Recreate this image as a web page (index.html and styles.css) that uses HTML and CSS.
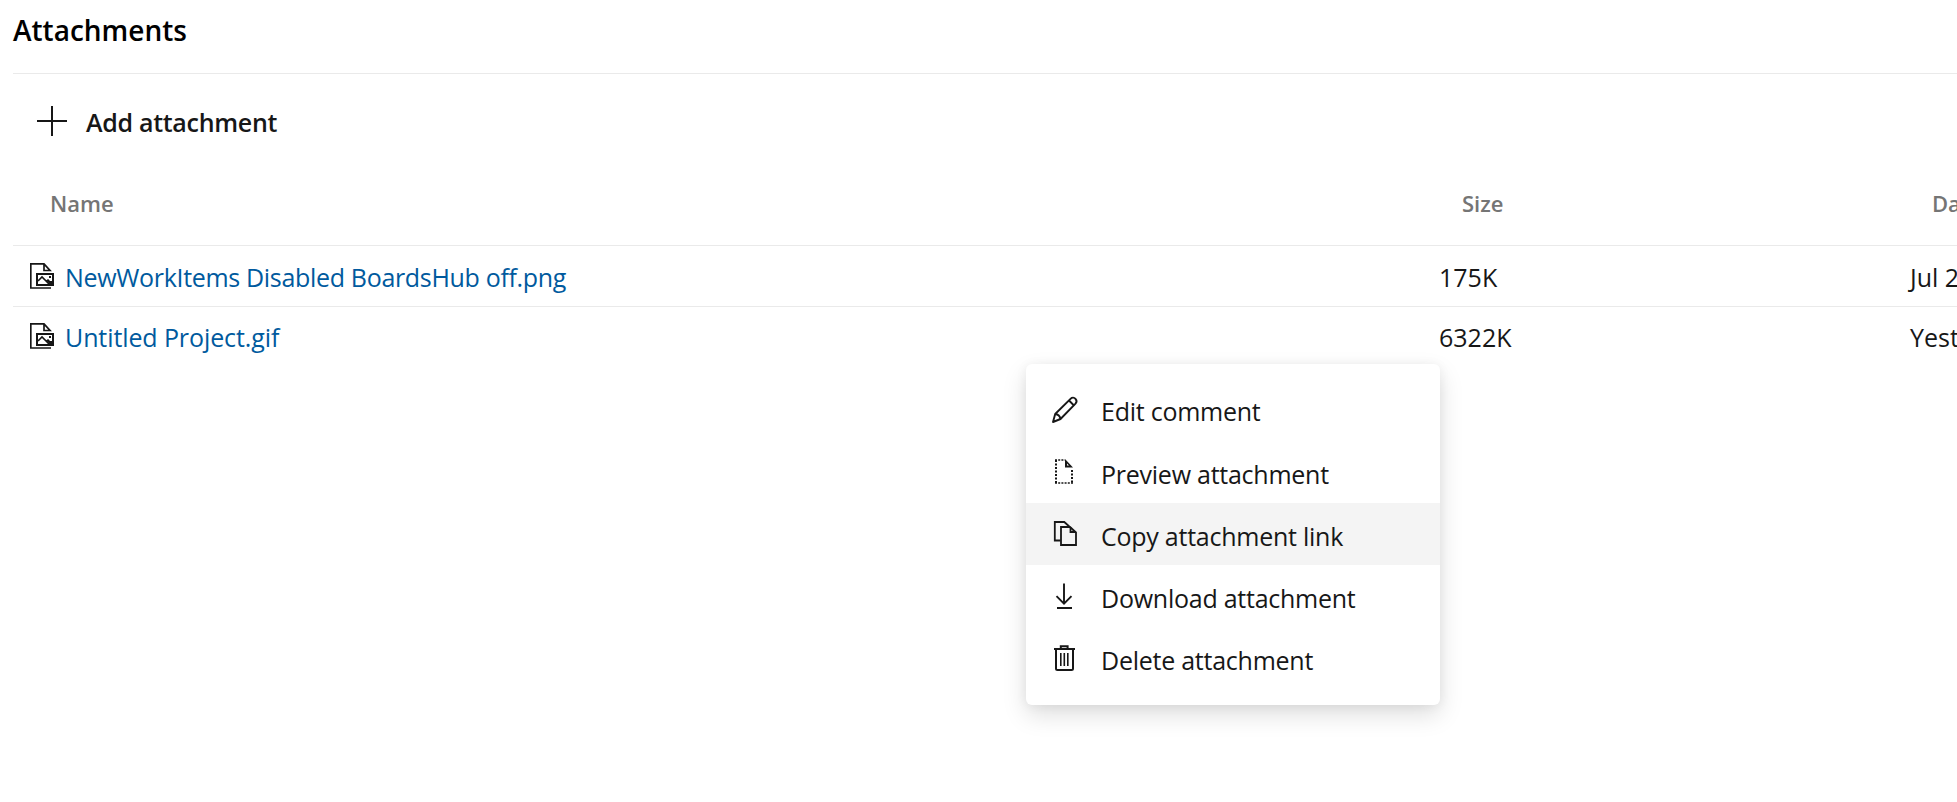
FILE: index.html
```html
<!DOCTYPE html>
<html lang="en">
<head>
<meta charset="utf-8">
<title>Attachments</title>
<link rel="stylesheet" href="styles.css">
</head>
<body>
<svg class="defs" width="0" height="0">
  <symbol id="picture-file" viewBox="0 0 24 26">
    <path d="M.8 25V.9H14l6 6.600h-6V.9M0 25h21" fill="none" stroke="currentColor" stroke-width="1.700"/>
    <path d="M7 11h16v11H7z" fill="#fff" stroke="currentColor" stroke-width="2"/>
    <path d="M8 18l4-4 7.500 7.500M16 18.500l2-1.500 4.500 4.500" fill="none" stroke="currentColor" stroke-width="1.600"/>
    <path d="M19 13h2v2h-2zM17 18h5v4h-2z" fill="currentColor"/>
  </symbol>
</svg>
<main class="page">
  <h1 class="title">Attachments</h1>
  <button class="add">
    <svg class="add-icon" viewBox="0 0 30 30"><path d="M15 0v30M0 15h30" stroke="currentColor" stroke-width="2"/></svg>
    <span class="add-label">Add attachment</span>
  </button>
  <div class="table">
    <div class="row head"><span>Name</span><span>Size</span><span>Date</span></div>
    <div class="row item">
      <div class="file"><svg class="file-icon"><use href="#picture-file"/></svg><a class="link long">NewWorkItems Disabled BoardsHub off.png</a></div>
      <span class="size">175K</span><span class="date">Jul 2</span>
    </div>
    <div class="row item last">
      <div class="file"><svg class="file-icon"><use href="#picture-file"/></svg><a class="link">Untitled Project.gif</a></div>
      <span class="size">6322K</span><span class="date">Yesterday</span>
    </div>
  </div>
</main>
<div class="menu">
  <div class="menu-item">
    <svg class="menu-icon" viewBox="0 0 28 28"><g fill="none" stroke="currentColor" stroke-width="1.900" stroke-linejoin="round"><path d="M2 26l2.200-8L19.500 2.800c1.600-1.600 3.700-1.500 5 0s1.300 3.400 0 4.800L9.500 23z"/><path d="M4.200 18c2.800.3 4.800 2.200 5.300 5M18 4.500l5 5"/></g></svg>
    <span>Edit comment</span>
  </div>
  <div class="menu-item">
    <svg class="menu-icon" viewBox="0 0 28 28"><g fill="none" stroke="currentColor"><path d="M5 2v23M21 12v13" stroke-width="2" stroke-dasharray="2 1.500"/><path d="M4 2h10M4 25h18" stroke-width="1.600" stroke-dasharray="2 1.200"/></g><path d="M14 1l8 8.500h-8zM16 5.500v2h2z" fill="currentColor" fill-rule="evenodd"/></svg>
    <span>Preview attachment</span>
  </div>
  <div class="menu-item hovered">
    <svg class="menu-icon" viewBox="0 0 28 28"><g fill="none" stroke="currentColor" stroke-width="1.800"><path d="M9.500 20.500H3.800V2h9.500l5 4.500"/><path d="M10 7h9l6 5.500V25H10z"/><path d="M19.500 7v5H25"/></g></svg>
    <span>Copy attachment link</span>
  </div>
  <div class="menu-item">
    <svg class="menu-icon" viewBox="0 0 28 28"><path d="M13 .5v20M5.500 13.200l7.500 7.500 7.500-7.500M6 25h15" fill="none" stroke="currentColor" stroke-width="1.900"/></svg>
    <span>Download attachment</span>
  </div>
  <div class="menu-item">
    <svg class="menu-icon" viewBox="0 0 28 28"><g fill="none" stroke="currentColor"><path d="M3 4h21M9.800 4V1.200h6.800V4M5 4v19.500q0 1.500 1.500 1.500h14q1.500 0 1.500-1.500V4" stroke-width="2"/><path d="M9.800 8v13M13.300 8v13M16.800 8v13" stroke-width="1.600"/></g></svg>
    <span>Delete attachment</span>
  </div>
</div>
</body>
</html>
```
FILE: styles.css
```css
* { box-sizing: border-box; }
body {
  margin: 0;
  height: 802px;
  overflow: hidden;
  background: #fff;
  color: #171717;
  font-family: "Open Sans", "Noto Sans", sans-serif;
  font-size: 25px;
}
.defs { position: absolute; }
.page { padding-left: 13px; overflow: hidden; }
.title {
  margin: 0;
  height: 74px;
  border-bottom: 1px solid #eaeaea;
  color: #000;
  font-size: 28px;
  font-weight: 600;
  line-height: 60px;
}
.add {
  display: flex;
  align-items: center;
  gap: 19px;
  height: 94px;
  padding: 0 0 0 24px;
  border: 0;
  background: none;
  color: inherit;
  font: inherit;
  font-weight: 600;
  letter-spacing: -.3px;
}
.add-icon { width: 30px; height: 30px; }
.add-label { padding-top: 1px; }
.row {
  display: grid;
  grid-template-columns: 1426px 471px minmax(0, 1fr);
  align-items: center;
  border-bottom: 1px solid #eaeaea;
  white-space: nowrap;
}
.head {
  height: 78px;
  padding: 0 0 8px;
  color: #757575;
  font-size: 22px;
  font-weight: 600;
}
.head span { padding-left: 37px; }
.item { height: 61px; padding-top: 2px; }
.head span + span { padding-left: 23px; }
.head span + span + span { padding-left: 22px; }
.last { height: 60px; padding-top: 0; border-bottom: 0; }
.file { display: flex; align-items: center; gap: 11px; padding-left: 17px; }
.file-icon { width: 24px; height: 26px; margin-bottom: 3px; }
.link { color: #005a9e; letter-spacing: -.1px; }
.long { letter-spacing: -.32px; }
.menu {
  position: absolute;
  left: 1026px;
  top: 364px;
  width: 414px;
  height: 341px;
  padding: 14.600px 0;
  border-radius: 6px;
  background: #fff;
  box-shadow: 0 10px 24px rgba(0, 0, 0, .13), 0 1px 12px rgba(0, 0, 0, .06);
}
.menu-item {
  display: flex;
  align-items: center;
  gap: 22px;
  height: 62.300px;
  padding: 3px 0 0 25px;
  letter-spacing: -.25px;
  white-space: nowrap;
}
.hovered { background: #f4f4f4; }
.menu-icon { width: 28px; height: 28px; margin-bottom: 3px; }
```
